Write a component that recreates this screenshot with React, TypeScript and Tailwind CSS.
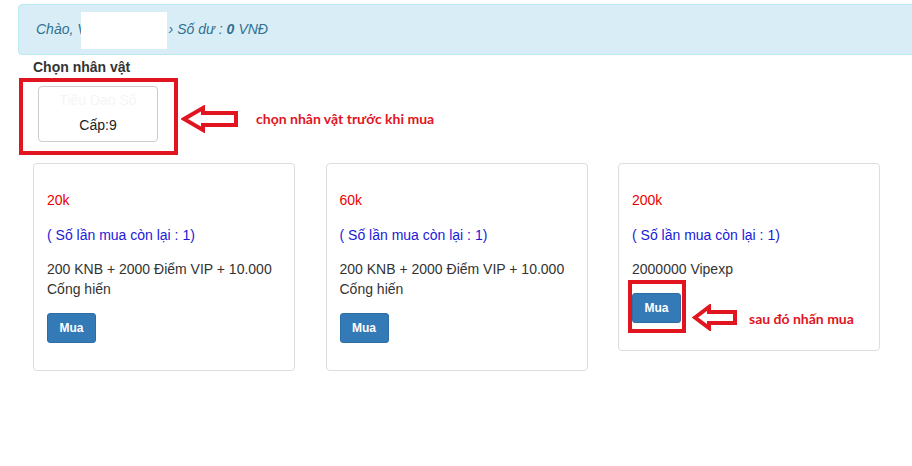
import React from "react";

interface Pack {
    price: string;
    left: number;
    desc: string;
}

const packs: Pack[] = [
    { price: "20k", left: 1, desc: "200 KNB + 2000 Điểm VIP + 10.000 Cống hiến" },
    { price: "60k", left: 1, desc: "200 KNB + 2000 Điểm VIP + 10.000 Cống hiến" },
    { price: "200k", left: 1, desc: "2000000 Vipexp" },
];

function HollowArrow({ w, h }: { w: number; h: number }) {
    const head = Math.round(w * 0.38);
    const mid = h / 2;
    const shaftTop = Math.round(h * 0.3);
    const shaftBot = h - shaftTop;
    const pts = [
        [3, mid],
        [head, 3],
        [head, shaftTop],
        [w - 3, shaftTop],
        [w - 3, shaftBot],
        [head, shaftBot],
        [head, h - 3],
    ]
        .map((p) => p.join(","))
        .join(" ");
    return (
        <svg width={w} height={h} viewBox={`0 0 ${w} ${h}`}>
            <polygon points={pts} fill="white" stroke="#e0151f" strokeWidth="4" strokeLinejoin="miter" />
        </svg>
    );
}

function PackCard({ pack, last }: { pack: Pack; last: boolean }) {
    return (
        <div className="w-[262px] border border-[#dddddd] rounded-[4px] bg-white pt-[26px] pb-[27px] px-[13px] self-start">
            <p className="text-[#ee0000] leading-[20px] mb-[15px]">{pack.price}</p>
            <p className="text-[#1a1ad6] leading-[20px] mb-[14px]">( Số lần mua còn lại : {pack.left})</p>
            <p className="text-[#333333] leading-[20px] mb-[14px]">{pack.desc}</p>
            <div className="relative w-[49px]">
                <button className="h-[30px] w-[49px] rounded-[3px] bg-[#337ab7] border border-[#2e6da4] text-white text-[12px] font-bold">
                    Mua
                </button>
                {last && (
                    <>
                        <div className="absolute -left-[4px] -top-[13px] w-[58px] h-[53px] border-4 border-[#e0151f]" />
                        <div className="absolute left-[60px] top-[11px]">
                            <HollowArrow w={46} h={27} />
                        </div>
                        <div className="absolute left-[117px] top-[16px] whitespace-nowrap text-[14px] font-bold text-[#e0151f] font-['Lato',sans-serif] leading-[20px]">
                            sau đó nhấn mua
                        </div>
                    </>
                )}
            </div>
        </div>
    );
}

export default function App() {
    return (
        <div className="w-[912px] h-[466px] overflow-hidden bg-white text-[14px] text-[#333333] font-['Liberation_Sans',Arial,sans-serif]">
            <div className="pt-[4px] pl-[18px]">
                <div className="w-[920px] h-[51px] bg-[#d9edf7] border border-[#bce8f1] rounded-[4px] pl-[17px] flex items-center italic text-[#31708f]">
                    <span>Chào, V</span>
                    <span className="inline-block w-[86px] h-[37px] bg-white -ml-[6px] mt-[2px]" />
                    <span className="ml-[2px]">› Số dư : </span>
                    <b className="ml-[4px]">0</b>
                    <span className="ml-[4px]">VNĐ</span>
                </div>
            </div>

            <div className="pl-[33px] pt-[2px] font-bold leading-[20px]">Chọn nhân vật</div>

            <div className="flex items-start pl-[19px] mt-[1px]">
                <div className="w-[159px] h-[77px] border-4 border-[#e0151f] pt-[4px] pl-[15px]">
                    <div className="w-[120px] h-[56px] border border-[#cccccc] rounded-[4px] text-center pt-[3px]">
                        <div className="leading-[20px] text-[#f5f5f5]">Tiêu Dao Số</div>
                        <div className="leading-[20px] mt-[5px] text-[#222222]">Cấp:9</div>
                    </div>
                </div>
                <div className="ml-[3px] mt-[27px]">
                    <HollowArrow w={58} h={28} />
                </div>
                <div className="ml-[17px] mt-[31px] text-[14px] font-bold text-[#e0151f] font-['Lato',sans-serif] leading-[20px]">
                    chọn nhân vật trước khi mua
                </div>
            </div>

            <div className="flex gap-[30.5px] pl-[33px] mt-[8px]">
                {packs.map((p, i) => (
                    <PackCard key={i} pack={p} last={i === packs.length - 1} />
                ))}
            </div>
        </div>
    );
}
